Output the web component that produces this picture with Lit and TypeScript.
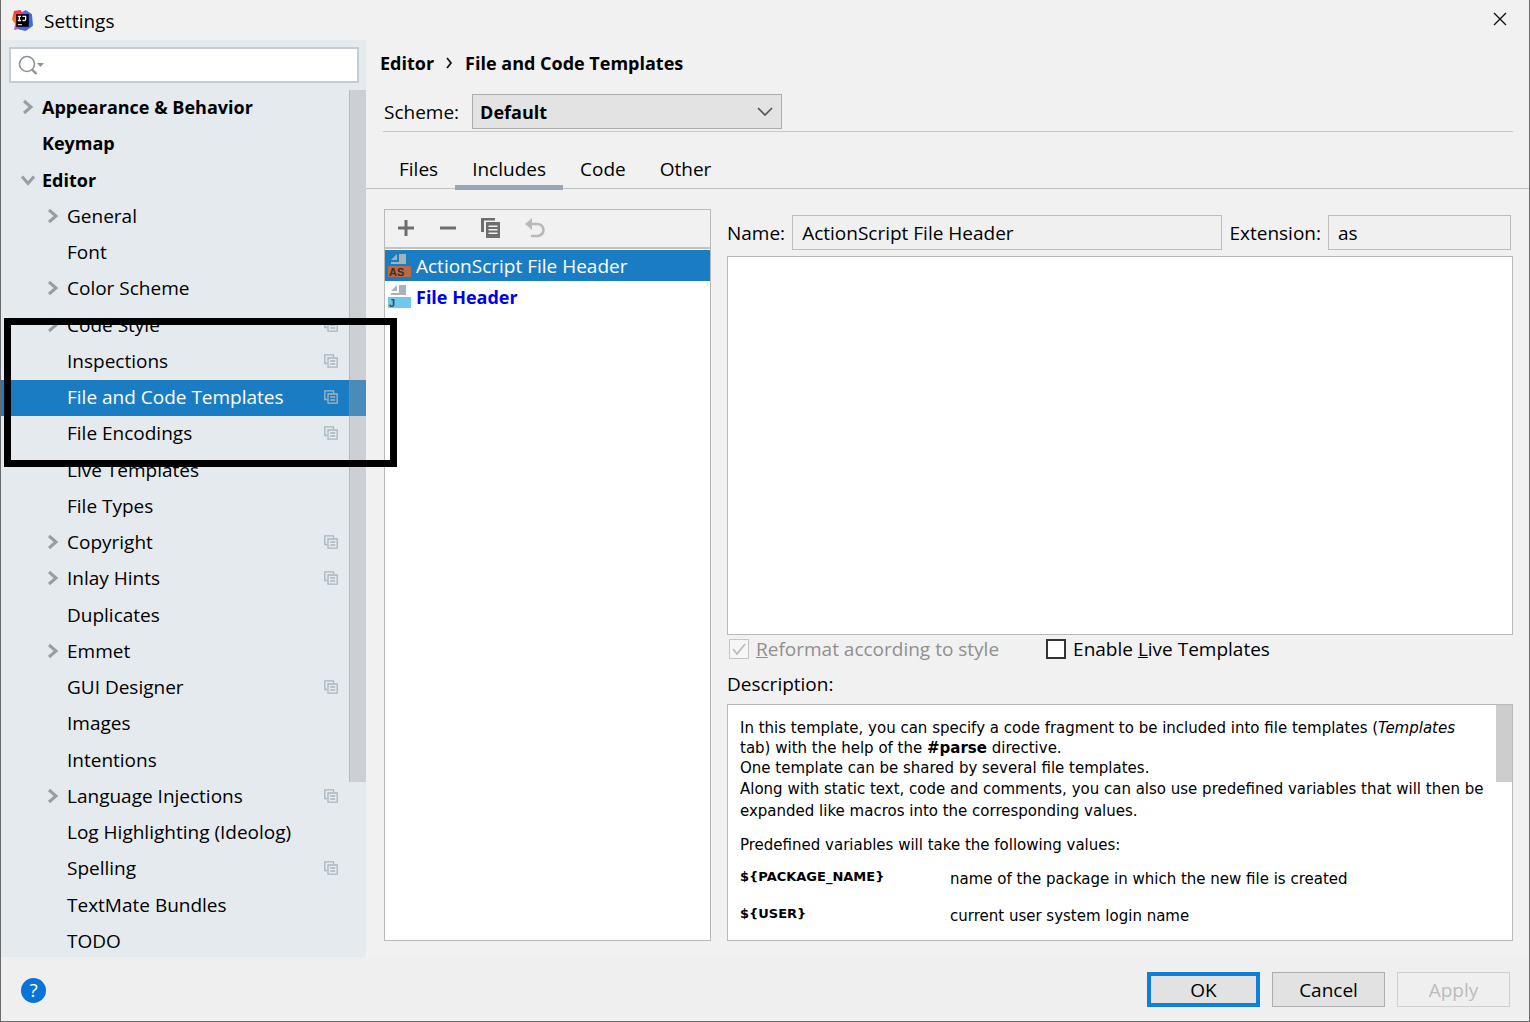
import { LitElement, html, css, svg, nothing } from "lit";
import { customElement, state } from "lit/decorators.js";
import { classMap } from "lit/directives/class-map.js";

type Node = { label: string; level: 0 | 1; arrow?: "closed" | "open"; badge?: boolean };

const TREE: Node[] = [
  { label: "Appearance & Behavior", level: 0, arrow: "closed" },
  { label: "Keymap", level: 0 },
  { label: "Editor", level: 0, arrow: "open" },
  { label: "General", level: 1, arrow: "closed" },
  { label: "Font", level: 1 },
  { label: "Color Scheme", level: 1, arrow: "closed" },
  { label: "Code Style", level: 1, arrow: "closed", badge: true },
  { label: "Inspections", level: 1, badge: true },
  { label: "File and Code Templates", level: 1, badge: true },
  { label: "File Encodings", level: 1, badge: true },
  { label: "Live Templates", level: 1 },
  { label: "File Types", level: 1 },
  { label: "Copyright", level: 1, arrow: "closed", badge: true },
  { label: "Inlay Hints", level: 1, arrow: "closed", badge: true },
  { label: "Duplicates", level: 1 },
  { label: "Emmet", level: 1, arrow: "closed" },
  { label: "GUI Designer", level: 1, badge: true },
  { label: "Images", level: 1 },
  { label: "Intentions", level: 1 },
  { label: "Language Injections", level: 1, arrow: "closed", badge: true },
  { label: "Log Highlighting (Ideolog)", level: 1 },
  { label: "Spelling", level: 1, badge: true },
  { label: "TextMate Bundles", level: 1 },
  { label: "TODO", level: 1 },
];

const TABS = ["Files", "Includes", "Code", "Other"];

const arrowIcon = (dir: "closed" | "open") => html`
  <svg width="16" height="16" viewBox="0 0 16 16" fill="none" stroke="#999da1" stroke-width="3">
    ${dir === "closed" ? svg`<path d="M4 2l7 6-7 6" />` : svg`<path d="M2 4.5l6 7 6-7" />`}
  </svg>`;

const projectIcon = html`
  <svg width="14" height="14" viewBox="0 0 14 14" fill="none" stroke="#a9b5bd" stroke-width="1.3">
    <path d="M3 9.5H.8V.8h8.700V3" />
    <path d="M4 4h9.200v9.200H4zM6.200 7h5M6.200 10h5" />
  </svg>`;

const logoIcon = html`
  <svg width="21" height="21" viewBox="0 0 20 20">
    <defs>
      <linearGradient id="lg-blue" x1="0" y1="0" x2="1" y2="1">
        <stop offset="0" stop-color="#8a5af0" /><stop offset=".4" stop-color="#4a66d8" /><stop offset="1" stop-color="#3a6ee8" />
      </linearGradient>
      <linearGradient id="lg-red" x1="0" y1="0" x2="0" y2="1">
        <stop offset="0" stop-color="#fe2857" /><stop offset=".5" stop-color="#f97a12" /><stop offset="1" stop-color="#b04be0" />
      </linearGradient>
    </defs>
    <path d="M8 3l5-3 6 4 1 11-7 5-8-2z" fill="url(#lg-blue)" />
    <path d="M2 1l6-1 3 4-5 9v5l-4 1 1-6-3-4z" fill="url(#lg-red)" />
    <rect x="4" y="4" width="12" height="12" fill="#000" />
    <path d="M5.500 6h3M7 6v4M5.500 10h3M10 6h3v3q0 1-1.500 1H10" fill="none" stroke="#fff" stroke-width="1.200" />
    <path d="M5.500 14h4" stroke="#fff" stroke-width="1" />
  </svg>`;

const templateIcon = (band: string, ink: string, mark: string) => html`
  <svg width="24" height="24" viewBox="0 0 24 24">
    <path d="M12 0h7v10H4V8h8z" fill="#a6b2ba" />
    <path d="M10 0v6H4z" fill="#a6b2ba" />
    <rect x="1" y="12" width="23" height="11" fill=${band} />
    <text x="2" y="22" font-size="11" font-weight="700" font-family="Liberation Sans, sans-serif" fill=${ink}>${mark}</text>
  </svg>`;

@customElement("app-root")
export class AppRoot extends LitElement {
  @state() private page = "File and Code Templates";
  @state() private tab = "Includes";

  static styles = css`
    :host {
      display: block;
      color: #000;
      font: 19px/28px "Open Sans", "Noto Sans", sans-serif;
    }
    * { box-sizing: border-box; }
    button, input, select, textarea { font: inherit; color: inherit; margin: 0; border-radius: 0; }
    button { background: none; border: 0; padding: 0; }
    svg { display: block; flex: none; }
    p { margin: 0; }

    .window {
      position: relative;
      display: flex;
      flex-direction: column;
      min-height: 100vh;
      background: #f1f1f1;
      border: solid #6b6b6b;
      border-width: 0 1px 1px;
    }
    .title {
      display: flex;
      align-items: center;
      height: 40px;
      padding: 0 22px 0 11px;
      gap: 11px;
    }
    .title h1 { flex: 1; margin: 0; padding-top: 2px; font: inherit; }
    .title button { padding-bottom: 2px; }
    .main { flex: 1; display: flex; min-height: 0; }

    .side {
      flex: none;
      width: 365px;
      display: flex;
      flex-direction: column;
      background: #e4eaee;
      padding-top: 7px;
      overflow: hidden;
    }
    .search {
      display: flex;
      align-items: center;
      gap: 4px;
      height: 36px;
      margin: 0 7px 7px 8px;
      padding: 0 7px;
      background: #fff;
      border: 2px solid #c5cbd0;
    }
    .search input { flex: 1; min-width: 0; border: 0; outline: 0; background: none; }
    .tree {
      position: relative;
      flex: 1;
      display: flex;
      flex-direction: column;
      margin-bottom: -3px;
    }
    .node {
      flex: 1;
      display: flex;
      align-items: center;
      gap: 6px;
      min-height: 30px;
      padding: 0 28px 2px 19px;
      text-align: left;
    }
    .node.child { padding-left: 44px; }
    .node.top { font-size: 18px; font-weight: 700; }
    .node.selected { background: #1a7dc4; color: #fff; }
    .slot { width: 16px; height: 16px; flex: none; }
    .name { flex: 1; white-space: nowrap; }
    .thumb {
      position: absolute;
      top: 0;
      right: 0;
      width: 17px;
      height: 692px;
      background: rgba(160, 163, 166, 0.36);
      border-left: 1px solid rgba(130, 136, 142, 0.3);
    }

    .content { flex: 1; min-width: 0; display: flex; flex-direction: column; }
    .crumbs {
      display: flex;
      align-items: center;
      gap: 12px;
      height: 46px;
      padding-left: 14px;
      font-size: 18px;
      font-weight: 700;
    }
    .scheme {
      display: flex;
      align-items: center;
      gap: 13px;
      margin: 0 16px 0 17px;
      padding: 8px 0 2px 1px;
      border-bottom: 1px solid #c8c8c8;
    }
    .combo { display: grid; width: 310px; align-items: center; }
    .combo select {
      grid-area: 1 / 1;
      appearance: none;
      height: 35px;
      padding: 0 7px;
      font-size: 18px;
      font-weight: 700;
      background: #e3e3e3;
      border: 1px solid #acacac;
    }
    .combo svg { grid-area: 1 / 1; justify-self: end; margin-right: 9px; pointer-events: none; }
    .tabs {
      display: flex;
      height: 57px;
      padding: 16px 0 0 16px;
      border-bottom: 1px solid #bdc0c4;
    }
    .tab { height: 42px; padding: 4px 17px 0; border-bottom: 5px solid transparent; }
    .tab.on { border-color: #9aa5b5; }

    .work { flex: 1; display: flex; gap: 16px; padding: 20px 16px 16px 18px; }
    .list {
      flex: none;
      width: 327px;
      display: flex;
      flex-direction: column;
      background: #fff;
      border: 1px solid #b9b9b9;
    }
    .tools {
      display: flex;
      align-items: center;
      gap: 22px;
      height: 39px;
      margin-bottom: 1px;
      padding: 0 0 2px 11px;
      background: #f1f1f1;
      border-bottom: 2px solid #c3c3c3;
    }
    .entry { display: flex; align-items: center; gap: 5px; height: 31px; padding-left: 2px; text-align: left; }
    .entry.selected { background: #1a7dc4; color: #fff; }
    .entry.own { color: #0000e6; font-size: 18px; font-weight: 700; }

    .form { flex: 1; min-width: 0; display: flex; flex-direction: column; }
    .fields { display: flex; align-items: center; gap: 7px; padding: 6px 2px 6px 0; }
    .fields input {
      height: 35px;
      min-width: 0;
      padding: 0 9px;
      background: #f0f0f0;
      border: 1px solid #bdbdbd;
      outline: 0;
    }
    .fname { flex: 1; }
    .fext { width: 183px; }
    .code {
      flex: 1;
      min-height: 200px;
      resize: none;
      background: #fff;
      border: 1px solid #b9b9b9;
      outline: 0;
    }
    .checks { display: flex; gap: 47px; padding-left: 2px; }
    .check { display: flex; align-items: center; gap: 7px; }
    .check input {
      appearance: none;
      width: 20px;
      height: 20px;
      background: #fff;
      border: 2px solid #333;
    }
    .check.off { color: #8f8f8f; }
    .check.off input { border: 1px solid #c4c4c4; background: #f6f6f6; }
    .box { display: grid; }
    .box > * { grid-area: 1 / 1; }
    .caption { padding: 7px 0 6px; }
    .doc {
      flex: none;
      display: flex;
      height: 237px;
      overflow: hidden;
      background: #fff;
      border: 1px solid #b9b9b9;
      font: 15px/20px Verdana, "DejaVu Sans", sans-serif;
    }
    .prose { flex: 1; padding: 13px 9px 0 12px; }
    .prose .loose { line-height: 22px; }
    .prose .lead { margin-top: 13px; }
    .vars { width: 100%; margin-top: 14px; border-spacing: 0; }
    .vars th, .vars td { padding: 0 0 17px; text-align: left; vertical-align: top; }
    .vars th { width: 210px; font-size: 13px; line-height: 16px; }
    .bar { width: 16px; height: 77px; background: #cdcdcd; }

    .foot {
      display: flex;
      align-items: center;
      gap: 12px;
      height: 64px;
      padding: 1px 19px 0 20px;
      background: #efefef;
    }
    .help {
      width: 25px;
      height: 25px;
      margin: 2px auto 0 0;
      border-radius: 50%;
      background: #0a73d8;
      color: #fff;
      line-height: 25px;
    }
    .push { width: 113px; height: 35px; background: #e2e2e2; border: 1px solid #adadad; line-height: 32px; }
    .push.ok { border: 4px solid #0f80d7; line-height: 26px; }
    .push:disabled { color: #bcbcbc; background: #efefef; border-color: #cfcfcf; }

    .marker {
      position: absolute;
      left: 3px;
      top: 318px;
      width: 393px;
      height: 149px;
      border: 7px solid #000;
      pointer-events: none;
    }
  `;

  private renderNode(n: Node) {
    const cls = { node: true, top: n.level === 0, child: n.level === 1, selected: n.label === this.page };
    return html`<button class=${classMap(cls)} @click=${() => (this.page = n.label)}>
      <span class="slot">${n.arrow ? arrowIcon(n.arrow) : nothing}</span>
      <span class="name">${n.label}</span>
      ${n.badge ? projectIcon : nothing}
    </button>`;
  }

  render() {
    return html`
      <div class="window">
        <header class="title">
          ${logoIcon}
          <h1>Settings</h1>
          <button aria-label="Close">
            <svg width="14" height="14" viewBox="0 0 14 14" stroke="#111" stroke-width="1.400"><path d="M1 1l12 12M13 1L1 13" /></svg>
          </button>
        </header>
        <div class="main">
          <nav class="side">
            <label class="search">
              <svg width="28" height="22" viewBox="0 0 28 22" fill="none" stroke="#8d9296" stroke-width="1.600">
                <circle cx="9" cy="10" r="7.500" /><path d="M14 15.500l4.500 4.500" stroke-width="2.400" />
                <path d="M19 9h7l-3.500 4z" fill="#8d9296" stroke="none" />
              </svg>
              <input type="text" aria-label="Search settings" />
            </label>
            <div class="tree">
              ${TREE.map((n) => this.renderNode(n))}
              <div class="thumb"></div>
            </div>
          </nav>
          <main class="content">
            <div class="crumbs">
              <span>Editor</span>
              <svg width="7" height="12" viewBox="0 0 7 12" fill="none" stroke="#111" stroke-width="1.700"><path d="M1 1l4 5-4 5" /></svg>
              <span>File and Code Templates</span>
            </div>
            <div class="scheme">
              <label for="scheme">Scheme:</label>
              <div class="combo">
                <select id="scheme"><option>Default</option></select>
                <svg width="16" height="10" viewBox="0 0 16 10" fill="none" stroke="#555" stroke-width="1.700"><path d="M1 1l7 7 7-7" /></svg>
              </div>
            </div>
            <div class="tabs">
              ${TABS.map((t) => html`<button class=${classMap({ tab: true, on: t === this.tab })} @click=${() => (this.tab = t)}>${t}</button>`)}
            </div>
            <div class="work">
              <section class="list">
                <div class="tools">
                  <button aria-label="Add">
                    <svg width="20" height="20" viewBox="0 0 20 20" stroke="#6e6e6e" stroke-width="3"><path d="M10 2v16M2 10h16" /></svg>
                  </button>
                  <button aria-label="Remove">
                    <svg width="20" height="20" viewBox="0 0 20 20" stroke="#6e6e6e" stroke-width="3"><path d="M2 10h16" /></svg>
                  </button>
                  <button aria-label="Copy">
                    <svg width="22" height="22" viewBox="0 0 22 22" fill="#6e6e6e">
                      <path d="M1 1h14v2.500H4V15H1z" />
                      <path fill-rule="evenodd" d="M6 5h14v16H6zM8.500 8.500v1.500h9V8.500zM8.500 12v1.500h9V12zM8.500 15.500V17h9v-1.500z" />
                    </svg>
                  </button>
                  <button aria-label="Reset">
                    <svg width="22" height="22" viewBox="0 0 22 22" fill="none" stroke="#b9b9b9" stroke-width="2.600">
                      <path d="M4 7h9.500a5.500 5.500 0 0 1 0 12H7" /><path d="M8 1v12L1 7z" fill="#b9b9b9" stroke="none" />
                    </svg>
                  </button>
                </div>
                <button class="entry selected">${templateIcon("#b8694a", "#4a2a1c", "AS")}ActionScript File Header</button>
                <button class="entry own">${templateIcon("#72c8ea", "#1f5468", "J")}File Header</button>
              </section>
              <section class="form">
                <div class="fields">
                  <label for="name">Name:</label>
                  <input id="name" class="fname" type="text" readonly .value=${"ActionScript File Header"} />
                  <label for="ext">Extension:</label>
                  <input id="ext" class="fext" type="text" readonly .value=${"as"} />
                </div>
                <textarea class="code" aria-label="Template text"></textarea>
                <div class="checks">
                  <label class="check off">
                    <span class="box">
                      <input type="checkbox" checked disabled />
                      <svg width="20" height="20" viewBox="0 0 20 20" fill="none" stroke="#bdbdbd" stroke-width="1.800"><path d="M4 10l4 5 8-10" /></svg>
                    </span>
                    <span><u>R</u>eformat according to style</span>
                  </label>
                  <label class="check">
                    <input type="checkbox" />
                    <span>Enable <u>L</u>ive Templates</span>
                  </label>
                </div>
                <div class="caption">Description:</div>
                <div class="doc">
                  <div class="prose">
                    <p>
                      In this template, you can specify a code fragment to be included into file templates (<i>Templates</i>
                      tab) with the help of the <b>#parse</b> directive.<br />One template can be shared by several file templates.
                    </p>
                    <p class="loose">
                      Along with static text, code and comments, you can also use predefined variables that will then be
                      expanded like macros into the corresponding values.
                    </p>
                    <p class="lead">Predefined variables will take the following values:</p>
                    <table class="vars">
                      <tr><th scope="row">\${PACKAGE_NAME}</th><td>name of the package in which the new file is created</td></tr>
                      <tr><th scope="row">\${USER}</th><td>current user system login name</td></tr>
                    </table>
                  </div>
                  <div class="bar"></div>
                </div>
              </section>
            </div>
          </main>
        </div>
        <footer class="foot">
          <button class="help" aria-label="Help">?</button>
          <button class="push ok">OK</button>
          <button class="push">Cancel</button>
          <button class="push" disabled>Apply</button>
        </footer>
        <div class="marker"></div>
      </div>
    `;
  }
}
